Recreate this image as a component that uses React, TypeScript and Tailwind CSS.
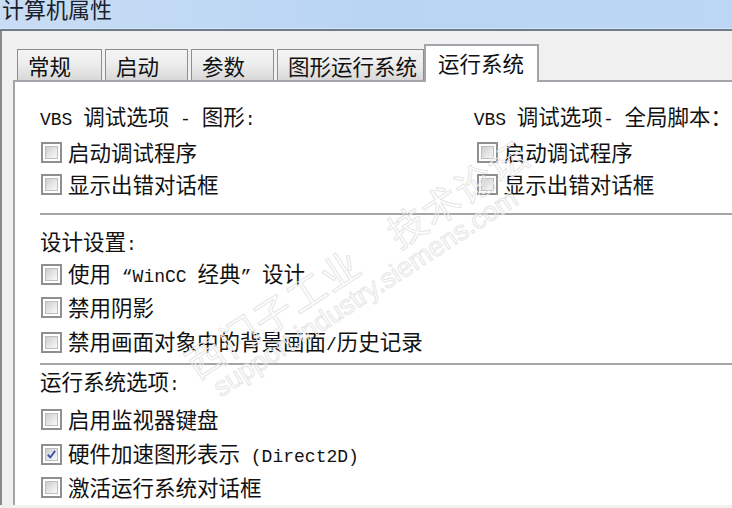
import React from "react";

const CJK = "font-['Noto_Sans_CJK_SC',sans-serif]";

// half-width latin runs, like SimSun's ASCII
function L({ children }: { children: React.ReactNode }) {
  return <span className="font-['Liberation_Mono','Noto_Sans_CJK_SC',monospace] text-[18px]">{children}</span>;
}

function Box({ checked }: { checked?: boolean }) {
  return (
    <div className="w-[21px] h-[21px] shrink-0 border-2 border-[#8f8f8f] bg-white p-[2px]">
      <div className="relative w-full h-full border border-[#bdbdbd] bg-linear-to-br from-[#cdcdcd] via-[#e4e4e4] to-[#fafafa]">
        {checked && (
          <svg viewBox="0 0 13 13" className="absolute inset-0 w-full h-full">
            <path d="M2.2 6.6 L5 10 L10.8 2.2" fill="none" stroke="#3b55a6" strokeWidth="2.2" strokeLinejoin="round" />
          </svg>
        )}
      </div>
    </div>
  );
}

function Row({ children, checked, className = "" }: { children: React.ReactNode; checked?: boolean; className?: string }) {
  return (
    <div className={`flex items-center h-[32px] gap-[6px] pl-[1px] ${className}`}>
      <Box checked={checked} />
      <span className="whitespace-pre">{children}</span>
    </div>
  );
}

function Heading({ children, className = "" }: { children: React.ReactNode; className?: string }) {
  return (
    <div className={`h-[32px] flex items-center ${className}`}>
      <span className="whitespace-pre">{children}</span>
    </div>
  );
}

function Separator({ className = "" }: { className?: string }) {
  return <div className={`h-[2px] bg-[#a6a6a6] ${className}`} />;
}

function Tab({ label, width }: { label: string; width: string }) {
  return (
    <div className={`${width} h-[31px] border border-b-0 border-[#8c8e94] bg-linear-to-b from-[#f4f4f4] via-[#ececec] to-[#d8d8d8] pl-[10px] pt-[2px] flex items-center`}>
      {label}
    </div>
  );
}

export default function App() {
  return (
    <div className={`relative w-[732px] h-[508px] overflow-hidden bg-[#f0f0f0] text-[21.5px] text-[#111] ${CJK}`}>
      {/* title bar */}
      <div className="h-[32px] bg-linear-to-r from-[#c8ddf4] via-[#b9d5f4] to-[#bcd7f6] border-b border-[#d6e6f8] pl-[2px]">
        <div className="-mt-[3px] text-[22px] leading-[22px] text-[#1c1e2c]">计算机属性</div>
      </div>
      <div className="h-[2px] bg-[#6f7d8b]" />

      <div className="h-[474px] border-l-2 border-[#8a8a8a] pl-[11px] pt-[13px] flex flex-col">
        {/* tabs */}
        <div className="flex items-end gap-[3px] pl-[4px] h-[36px]">
          <Tab label="常规" width="w-[85px]" />
          <Tab label="启动" width="w-[83px]" />
          <Tab label="参数" width="w-[83px]" />
          <Tab label="图形运行系统" width="w-[147px]" />
          <div className="relative z-10 -ml-[3px] -mb-[2px] w-[115px] h-[38px] border-2 border-b-0 border-[#a3a5aa] bg-white pl-[12px] pb-[2px] flex items-center">
            运行系统
          </div>
        </div>

        {/* panel */}
        <div className="flex-1 border-t-2 border-l-2 border-[#a3a5aa] bg-white pl-[25px] pt-[19px]">
          <div className="flex">
            <div className="w-[436px]">
              <Heading>
                <L>VBS </L>调试选项<L> - </L>图形<L>:</L>
              </Heading>
              <Row className="mt-[3px]">启动调试程序</Row>
              <Row>显示出错对话框</Row>
            </div>
            <div>
              <Heading>
                <L>VBS </L>调试选项<L>- </L>全局脚本：
              </Heading>
              <Row className="mt-[3px] pl-[3px]">启动调试程序</Row>
              <Row className="pl-[3px]">显示出错对话框</Row>
            </div>
          </div>

          <Separator className="mt-[13px]" />

          <Heading className="mt-[11px]">
            设计设置<L>:</L>
          </Heading>
          <Row>
            使用<L> “WinCC </L>经典<L>” </L>设计
          </Row>
          <Row className="mt-[1px]">禁用阴影</Row>
          <Row className="mt-[3px]">
            禁用画面对象中的背景画面<L>/</L>历史记录
          </Row>

          <Separator className="mt-[5px]" />

          <Heading className="mt-[1px]">
            运行系统选项<L>:</L>
          </Heading>
          <Row className="mt-[5px]">启用监视器键盘</Row>
          <Row className="mt-[3px]" checked>
            硬件加速图形表示<L> (Direct2D)</L>
          </Row>
          <Row className="mt-[1px]">激活运行系统对话框</Row>
        </div>
      </div>

      {/* forum watermark */}
      <div className="pointer-events-none absolute left-[178px] top-[350px] origin-top-left -rotate-[33deg] whitespace-nowrap text-transparent [-webkit-text-stroke:1px_#e6e6e6]">
        <div className="text-[38px] leading-[40px] tracking-[2px]">西门子工业　技术论坛</div>
        <div className="text-[27px] leading-[28px] font-['Liberation_Sans',sans-serif] pl-[10px]">support.industry.siemens.com</div>
      </div>
    </div>
  );
}
